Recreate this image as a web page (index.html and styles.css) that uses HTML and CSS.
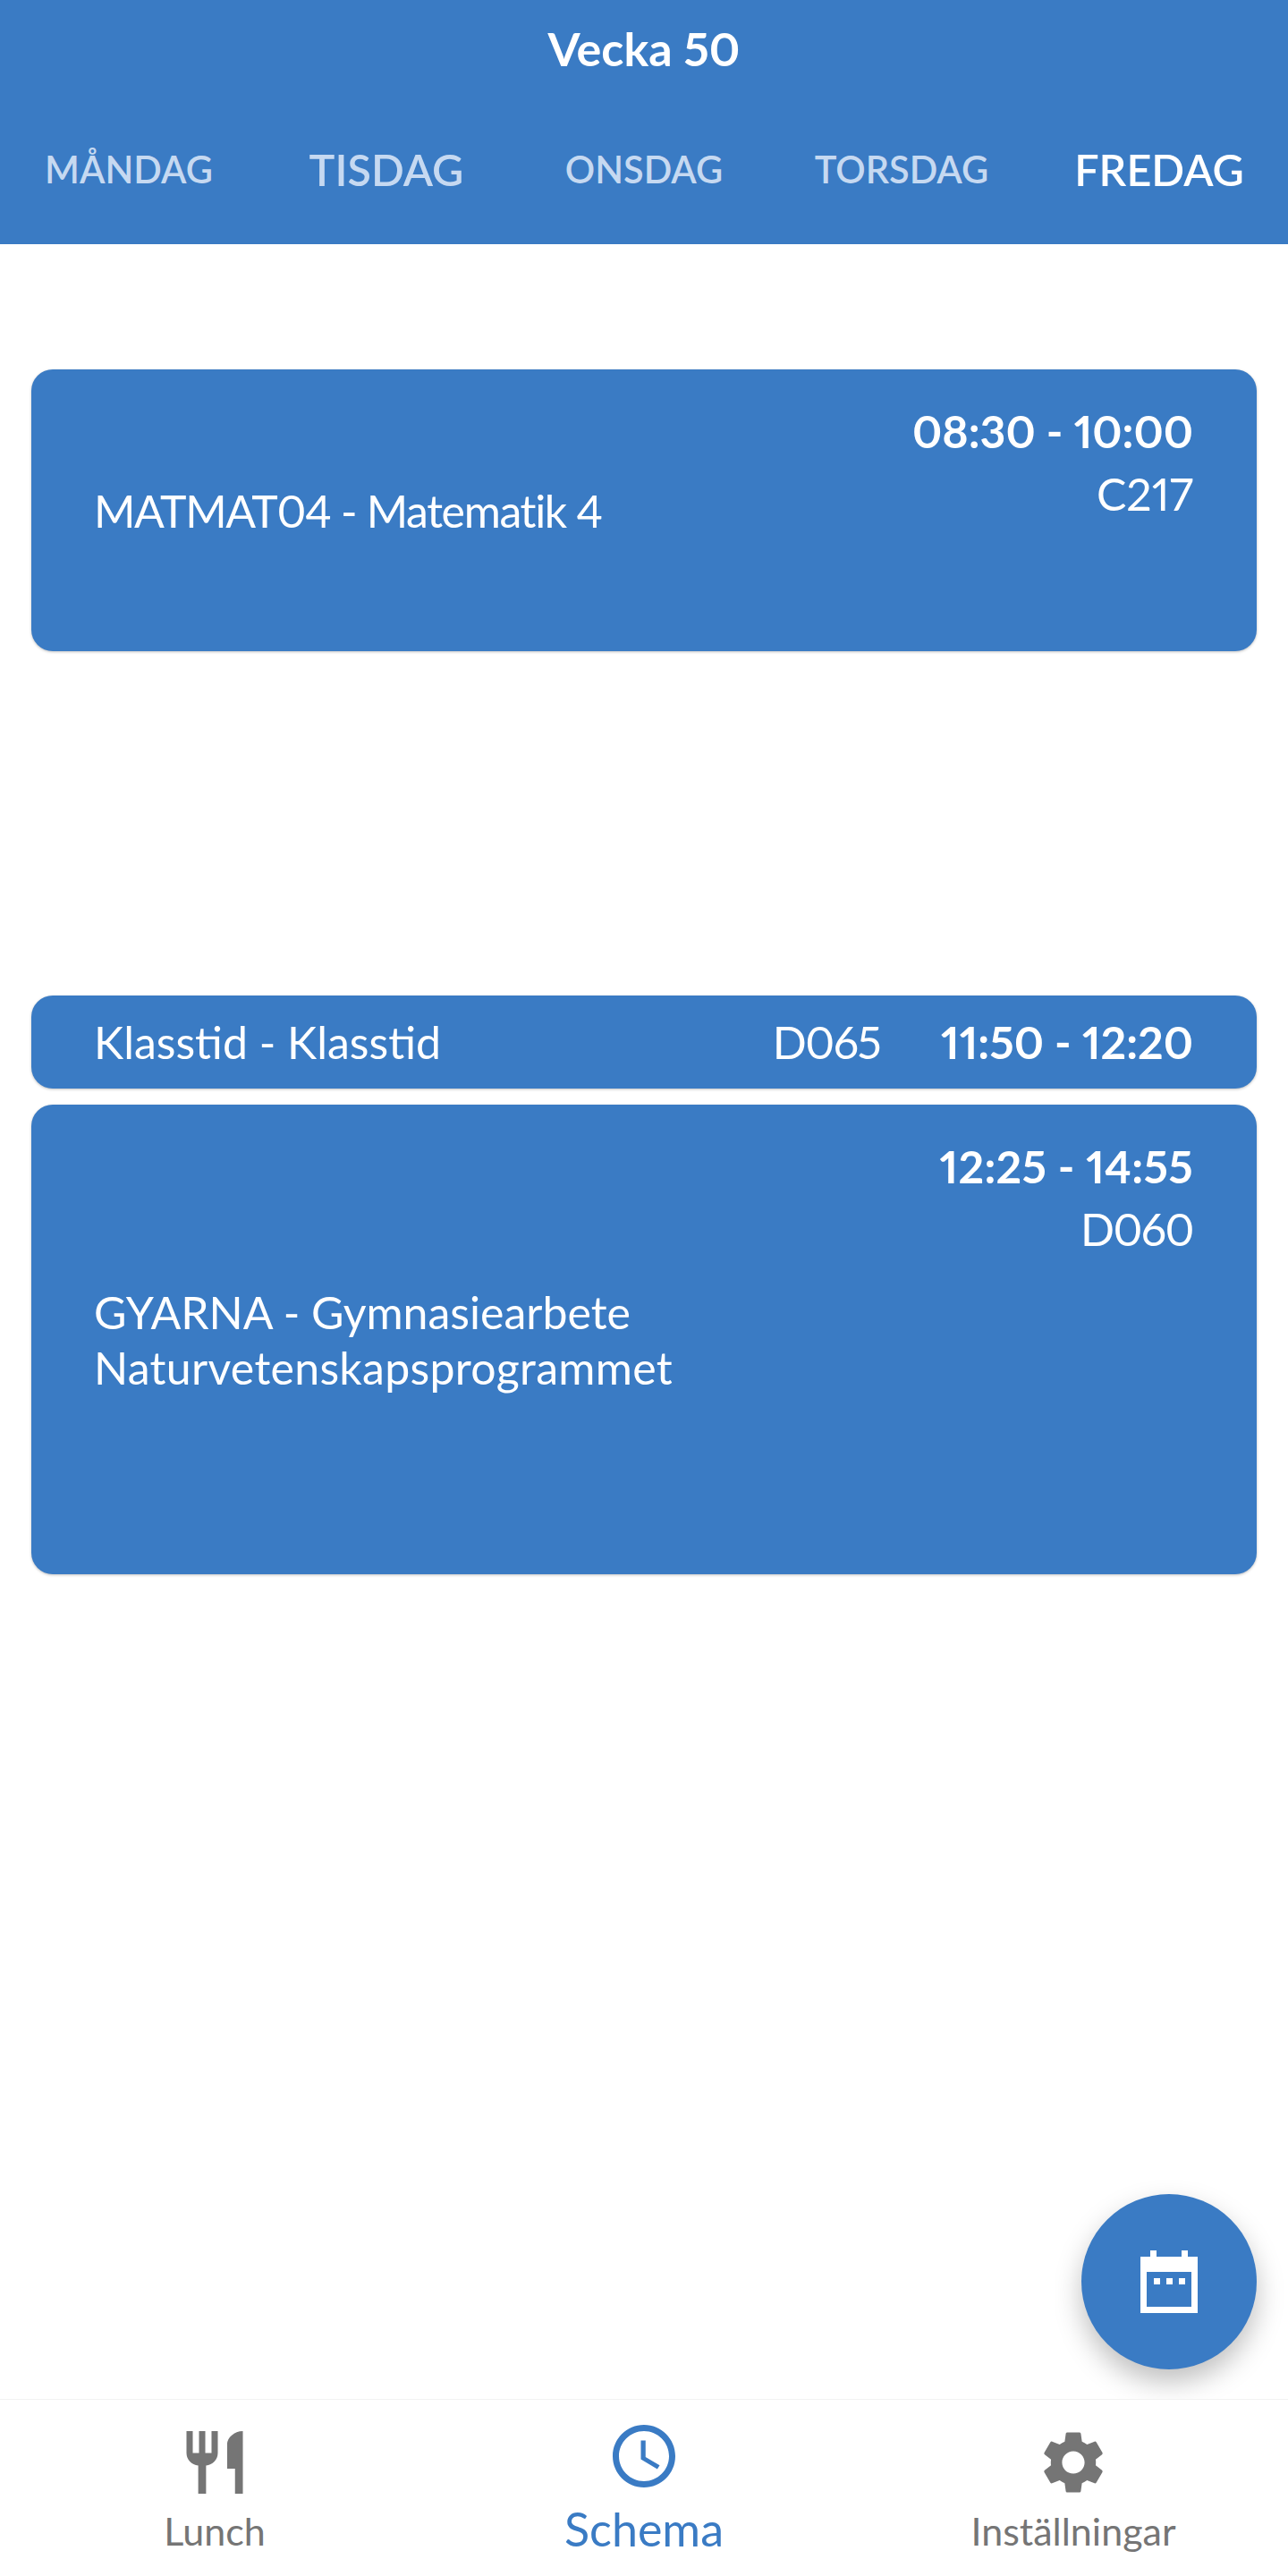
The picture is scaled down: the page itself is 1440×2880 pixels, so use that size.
FILE: index.html
```html
<!DOCTYPE html>
<html lang="sv">
<head>
    <meta charset="UTF-8">
    <meta name="viewport" content="width=device-width, initial-scale=1.0">
    <title>Schema</title>
    <link rel="stylesheet" href="styles.css">
</head>
<body>
    <!-- Veckohuvud -->
    <header class="header">
        <div class="week">Vecka 50</div>
        <div class="tabs">
            <div class="tab">MÅNDAG</div>
            <div class="tab tab-big">TISDAG</div>
            <div class="tab">ONSDAG</div>
            <div class="tab">TORSDAG</div>
            <div class="tab tab-big tab-active">FREDAG</div>
        </div>
    </header>

    <!-- Lektioner -->
    <main class="schedule">
        <div class="lesson lesson-math">
            <div class="lesson-name">MATMAT04 - Matematik 4</div>
            <div class="lesson-info">
                <div class="lesson-time">08:30 - 10:00</div>
                <div class="lesson-room">C217</div>
            </div>
        </div>

        <div class="lesson lesson-short">
            <div class="lesson-name">Klasstid - Klasstid</div>
            <div class="lesson-room">D065</div>
            <div class="lesson-time">11:50 - 12:20</div>
        </div>

        <div class="lesson lesson-long">
            <div class="lesson-name">GYARNA - Gymnasiearbete<br><span class="name-wide">Naturvetenskapsprogrammet</span></div>
            <div class="lesson-info">
                <div class="lesson-time">12:25 - 14:55</div>
                <div class="lesson-room">D060</div>
            </div>
        </div>
    </main>

    <!-- Kalenderknapp -->
    <button class="fab" aria-label="Kalender">
        <svg class="fab-icon" viewBox="0 0 64 70" fill="#fff">
            <path fill-rule="evenodd" d="M11 0h7v7h28V0h7v7h11v63H0V7h11zM7 24v39h50V24z"/>
            <rect x="15" y="31" width="7" height="7"/>
            <rect x="29" y="31" width="7" height="7"/>
            <rect x="43" y="31" width="7" height="7"/>
        </svg>
    </button>

    <!-- Bottenmeny -->
    <nav class="nav">
        <div class="nav-item">
            <svg class="nav-icon" viewBox="0 0 24 24"><path d="M11 9H9V2H7v7H5V2H3v7c0 2.12 1.66 3.84 3.75 3.97V22h2.5v-9.03C11.34 12.84 13 11.12 13 9V2h-2v7zm5-3v8h2.5v8H21V2c-2.76 0-5 2.24-5 4z"/></svg>
            <div class="nav-label">Lunch</div>
        </div>
        <div class="nav-item nav-active">
            <svg class="nav-icon" viewBox="0 0 24 24"><path d="M11.99 2C6.47 2 2 6.48 2 12s4.47 10 9.99 10C17.52 22 22 17.52 22 12S17.52 2 11.99 2zM12 20c-4.42 0-8-3.58-8-8s3.58-8 8-8 8 3.58 8 8-3.58 8-8 8zm.5-13H11v6l5.25 3.15.75-1.23-4.5-2.67z"/></svg>
            <div class="nav-label">Schema</div>
        </div>
        <div class="nav-item">
            <svg class="nav-icon" viewBox="0 0 24 24"><path d="M19.14 12.94c.04-.3.06-.61.06-.94 0-.32-.02-.64-.07-.94l2.03-1.58c.18-.14.23-.41.12-.61l-1.92-3.32c-.12-.22-.37-.29-.59-.22l-2.39.96c-.5-.38-1.03-.7-1.62-.94l-.36-2.54c-.04-.24-.24-.41-.48-.41h-3.84c-.24 0-.43.17-.47.41l-.36 2.54c-.59.24-1.13.57-1.62.94l-2.39-.96c-.22-.08-.47 0-.59.22L2.74 8.87c-.12.21-.08.47.12.61l2.03 1.58c-.05.3-.09.63-.09.94s.02.64.07.94l-2.03 1.58c-.18.14-.23.41-.12.61l1.92 3.32c.12.22.37.29.59.22l2.39-.96c.5.38 1.03.7 1.62.94l.36 2.54c.05.24.24.41.48.41h3.84c.24 0 .44-.17.47-.41l.36-2.54c.59-.24 1.13-.56 1.62-.94l2.39.96c.22.08.47 0 .59-.22l1.92-3.32c.12-.22.07-.47-.12-.61l-2.01-1.58zM12 15.6c-1.98 0-3.6-1.62-3.6-3.6s1.62-3.6 3.6-3.6 3.6 1.62 3.6 3.6-1.62 3.6-3.6 3.6z"/></svg>
            <div class="nav-label">Inställningar</div>
        </div>
    </nav>
</body>
</html>
```

FILE: styles.css
```css
/* Allmänt */
body {
    margin: 0;
    height: 2880px;
    display: flex;
    flex-direction: column;
    position: relative;
    overflow: hidden;
    background-color: #FFFFFF;
    font-family: "Lato", "Noto Sans", sans-serif;
    font-variant-numeric: proportional-nums;
    color: #FFFFFF;
}

/* Veckohuvud */
.header {
    height: 273px;
    flex-shrink: 0;
    background-color: #3A7BC4;
}

.week {
    padding-top: 29px;
    text-align: center;
    font-size: 52px;
    line-height: 50px;
    font-weight: 700;
}

.tabs {
    display: grid;
    grid-template-columns: repeat(5, 1fr);
    align-items: center;
    height: 60px;
    margin-top: 80px;
}

.tab {
    text-align: center;
    font-size: 41.5px;
    font-weight: 600;
    color: #C6D9F1;
}

.tab-big {
    font-size: 48.5px;
}

.tab-active {
    color: #FFFFFF;
}

/* Lektioner */
.schedule {
    flex: 1;
    padding: 140px 35px 0;
}

.lesson {
    display: flex;
    justify-content: space-between;
    align-items: center;
    box-sizing: border-box;
    padding: 0 71px 0 70px;
    border-radius: 24px;
    background-color: #3A7BC4;
    box-shadow: 0 1px 3px rgba(0, 0, 0, 0.25);
    font-size: 50px;
    line-height: 62px;
}

.lesson-math {
    height: 315px;
}

.lesson-math .lesson-name {
    letter-spacing: -1.35px;
}

.lesson-short {
    height: 104px;
    margin-top: 385px;
}

.lesson-short .lesson-name {
    margin-right: auto;
}

.lesson-short .lesson-room {
    margin-right: 68px;
    letter-spacing: -1.5px;
}

.lesson-long {
    height: 525px;
    margin-top: 18px;
}

.lesson-long .lesson-room {
    letter-spacing: -1.5px;
}

.lesson-long .lesson-time {
    letter-spacing: 0.3px;
}

.name-wide {
    letter-spacing: 0.3px;
}

.lesson-info {
    align-self: flex-start;
    padding-top: 34px;
    text-align: right;
    line-height: 70px;
}

.lesson-time {
    font-weight: 700;
}

/* Kalenderknapp */
.fab {
    position: absolute;
    left: 1209px;
    top: 2453px;
    width: 196px;
    height: 196px;
    display: flex;
    align-items: center;
    justify-content: center;
    padding: 0;
    border: none;
    border-radius: 50%;
    background-color: #3A7BC4;
    box-shadow: 0 14px 30px rgba(0, 0, 0, 0.25);
}

.fab-icon {
    width: 64px;
    height: 70px;
}

/* Bottenmeny */
.nav {
    position: relative;
    display: grid;
    grid-template-columns: repeat(3, 1fr);
    height: 197px;
    flex-shrink: 0;
    background-color: #FFFFFF;
    border-top: 1px solid #F2F2F2;
}

.nav-item {
    display: flex;
    flex-direction: column;
    align-items: center;
    padding-top: 28px;
    color: #757575;
}

.nav-icon {
    width: 84px;
    height: 84px;
    fill: currentColor;
}

.nav-label {
    font-size: 43px;
    line-height: 50px;
    margin-top: 10px;
}

.nav-active {
    padding-top: 21px;
    color: #3A7BC4;
}

.nav-active .nav-label {
    font-size: 52px;
    margin-top: 14px;
}
```
